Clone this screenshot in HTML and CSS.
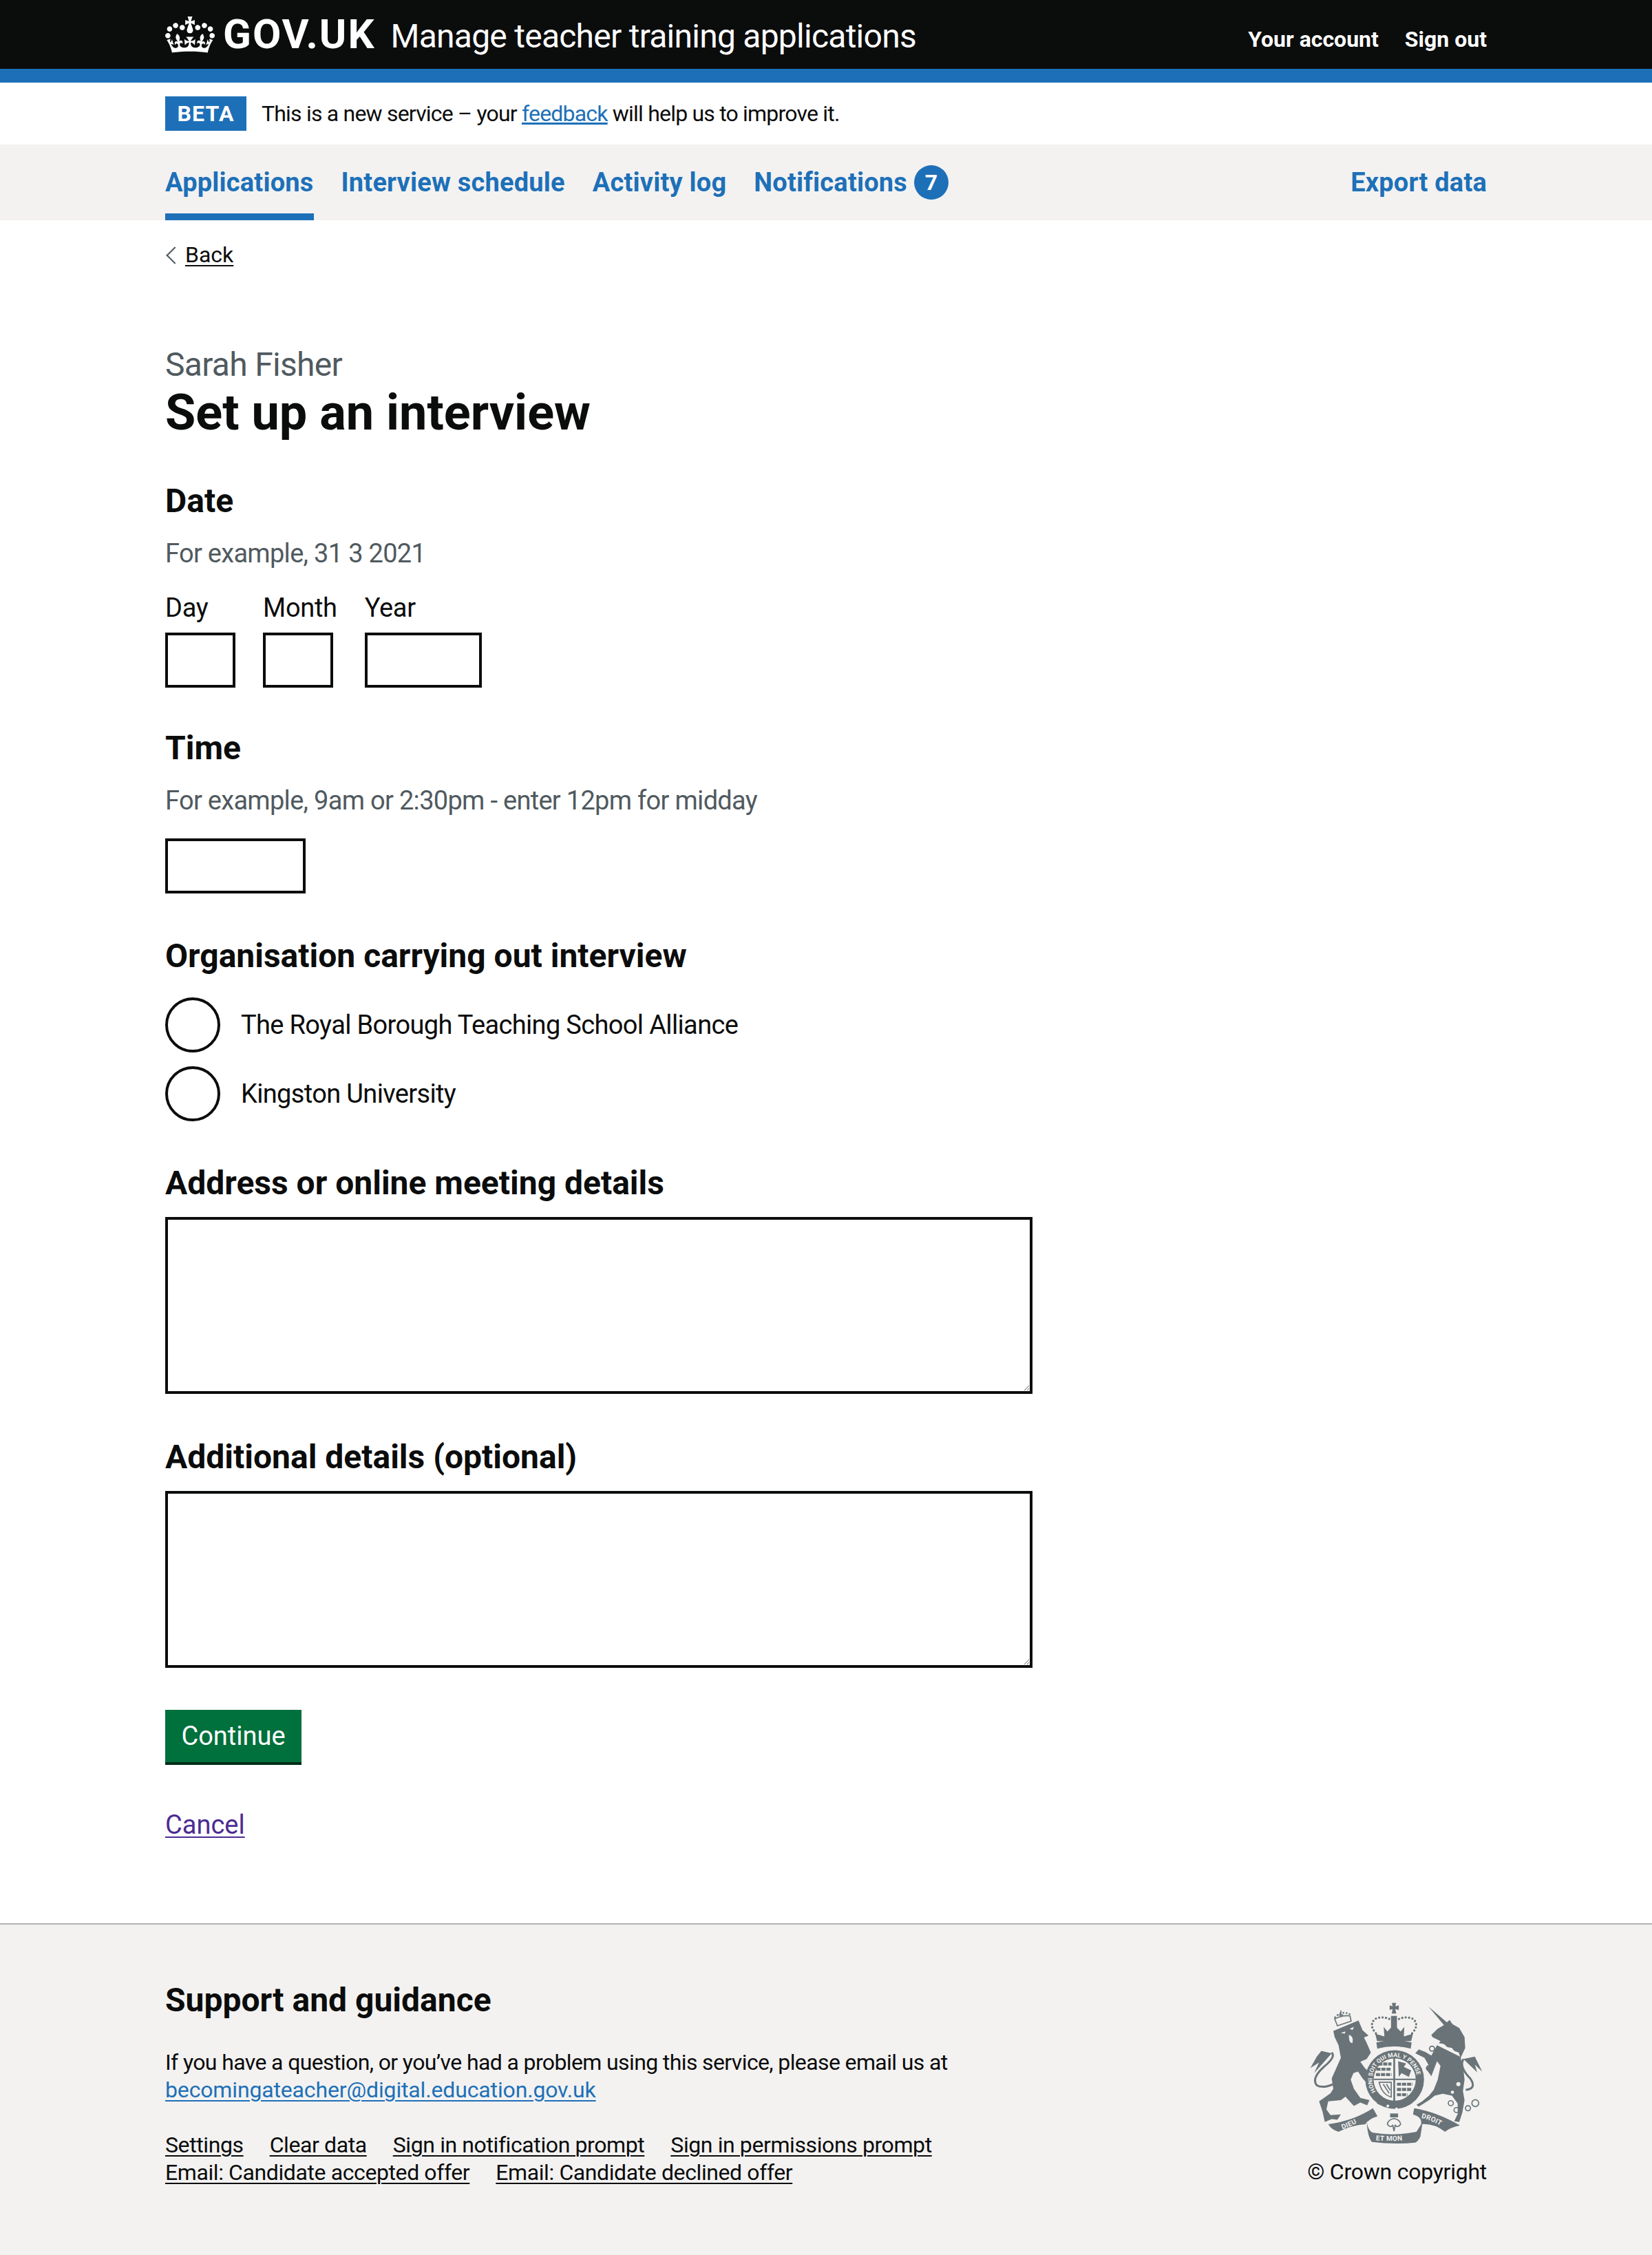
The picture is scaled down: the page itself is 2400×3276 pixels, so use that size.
FILE: index.html
```html
<!DOCTYPE html>
<html lang="en">
<head>
    <meta charset="UTF-8">
    <meta name="viewport" content="width=device-width, initial-scale=1.0">
    <title>Set up an interview - Manage teacher training applications</title>
    <link rel="stylesheet" href="styles.css">
</head>
<body>
    <header class="site-header">
        <div class="container header-row">
            <a class="logo" href="#">
                <svg class="crown" viewBox="0 0 132 97" aria-hidden="true">
                    <path fill="currentColor" d="M25 30.2c3.5 1.5 7.7-.2 9.1-3.7 1.5-3.6-.2-7.8-3.9-9.2-3.6-1.4-7.6.3-9.1 3.9-1.4 3.5.3 7.5 3.9 9zM9 39.5c3.6 1.5 7.8-.2 9.2-3.7 1.5-3.6-.2-7.8-3.9-9.1-3.6-1.5-7.6.2-9.1 3.8-1.4 3.5.3 7.5 3.8 9zM4.4 57.2c3.5 1.5 7.7-.2 9.1-3.8 1.5-3.6-.2-7.7-3.9-9.1-3.5-1.5-7.6.3-9.1 3.8-1.4 3.5.3 7.6 3.9 9.1zm38.3-21.4c3.5 1.5 7.7-.2 9.1-3.8 1.5-3.6-.2-7.7-3.9-9.1-3.6-1.5-7.6.3-9.1 3.8-1.3 3.6.4 7.7 3.9 9.1zm64.4-5.6c-3.6 1.5-7.8-.2-9.1-3.7-1.5-3.6.2-7.8 3.8-9.2 3.6-1.4 7.7.3 9.2 3.9 1.3 3.5-.4 7.5-3.9 9zm15.9 9.3c-3.6 1.5-7.7-.2-9.1-3.7-1.5-3.6.2-7.8 3.7-9.1 3.6-1.5 7.7.2 9.2 3.8 1.5 3.5-.3 7.5-3.8 9zm4.7 17.7c-3.6 1.5-7.8-.2-9.2-3.8-1.5-3.6.2-7.7 3.9-9.1 3.6-1.5 7.7.3 9.2 3.8 1.3 3.5-.4 7.6-3.9 9.1zM89.3 35.8c-3.6 1.5-7.8-.2-9.2-3.8-1.4-3.6.2-7.7 3.9-9.1 3.6-1.5 7.7.3 9.2 3.8 1.4 3.6-.3 7.7-3.9 9.1zM69.7 17.7l8.9 4.7V9.3l-8.9 2.8c-.2-.3-.5-.6-.9-.9L72.4 0H59.6l3.5 11.2c-.3.3-.6.5-.9.9l-8.8-2.8v13.1l8.8-4.7c.3.3.6.7.9.9l-5 15.4v.1c-.2.8-.4 1.6-.4 2.4 0 4.1 3.1 7.5 7 8.1h.2c.3 0 .7.1 1 .1.4 0 .7 0 1-.1h.2c4-.6 7.1-4.1 7.1-8.1 0-.8-.1-1.7-.4-2.4V34l-5.1-15.4c.4-.2.7-.6 1-.9zM66 92.8c16.9 0 32.8 1.1 47.1 3.2 4-16.9 8.9-26.7 14-33.5l-9.6-3.4c1 4.9 1.1 7.2 0 10.2-1.5-1.4-3-4.3-4.2-8.7L108.6 76c2.8-2 5-3.2 7.5-3.3-4.4 9.4-10 11.9-13.6 11.2-4.3-.8-6.3-4.6-5.6-7.9 1-4.7 5.7-5.9 8-.5 4.3-8.7-3-11.4-7.6-8.8 7.1-7.2 7.9-13.5 2.1-21.1-8 6.1-8.1 12.3-4.5 20.8-4.7-5.4-12.1-2.5-9.5 6.2 3.4-5.2 7.9-2 7.2 3.1-.6 4.3-6.4 7.8-13.5 7.2-10.3-.9-10.9-8-11.2-13.8 2.5-.5 7.1 1.8 11 7.3L80.2 60c-4.1 4.4-8 5.3-12.3 5.4 1.4-4.4 8-11.6 8-11.6H55.5s6.4 7.2 7.9 11.6c-4.2-.1-8-1-12.3-5.4l1.4 16.4c3.9-5.5 8.5-7.7 10.9-7.3-.3 5.8-.9 12.8-11.1 13.8-7.2.6-12.9-2.9-13.5-7.2-.7-5 3.8-8.3 7.1-3.1 2.7-8.7-4.6-11.6-9.4-6.2 3.7-8.5 3.6-14.7-4.6-20.8-5.8 7.6-5 13.9 2.2 21.1-4.7-2.6-11.9.1-7.7 8.8 2.3-5.5 7.1-4.2 8.1.5.7 3.3-1.3 7.1-5.7 7.9-3.5.7-9-1.8-13.5-11.2 2.5.1 4.7 1.3 7.5 3.3l-4.7-15.4c-1.2 4.4-2.7 7.2-4.3 8.7-1.1-3-.9-5.3 0-10.2l-9.5 3.4c5 6.9 9.9 16.7 14 33.5 14.8-2.1 30.8-3.2 47.7-3.2z"/>
                </svg>
                <span class="logo-text">GOV.UK</span>
            </a>
            <a class="service-name" href="#">Manage teacher training applications</a>
            <nav class="account-nav">
                <a href="#">Your account</a>
                <a href="#">Sign out</a>
            </nav>
        </div>
    </header>

    <div class="container phase-banner">
        <strong class="phase-tag">BETA</strong>
        <span class="phase-text">This is a new service – your <a class="link" href="#">feedback</a> will help us to improve it.</span>
    </div>

    <nav class="primary-nav">
        <div class="container primary-row">
            <a class="nav-item active" href="#">Applications</a>
            <a class="nav-item" href="#">Interview schedule</a>
            <a class="nav-item" href="#">Activity log</a>
            <a class="nav-item" href="#">Notifications <span class="badge">7</span></a>
            <a class="nav-item nav-end" href="#">Export data</a>
        </div>
    </nav>

    <main class="container">
        <a class="back-link" href="#">Back</a>

        <form class="interview-form">
            <span class="caption">Sarah Fisher</span>
            <h1>Set up an interview</h1>

            <fieldset class="form-group date-group">
                <legend class="heading">Date</legend>
                <div class="hint">For example, 31 3 2021</div>
                <div class="date-input">
                    <div class="date-item">
                        <label for="day">Day</label>
                        <input id="day" class="input width-2" type="text">
                    </div>
                    <div class="date-item">
                        <label for="month">Month</label>
                        <input id="month" class="input width-2" type="text">
                    </div>
                    <div class="date-item">
                        <label for="year">Year</label>
                        <input id="year" class="input width-4" type="text">
                    </div>
                </div>
            </fieldset>

            <div class="form-group time-group">
                <label class="heading" for="time">Time</label>
                <div class="hint">For example, 9am or 2:30pm - enter 12pm for midday</div>
                <input id="time" class="input width-5" type="text">
            </div>

            <fieldset class="form-group radio-group">
                <legend class="heading">Organisation carrying out interview</legend>
                <div class="radios">
                    <label class="radio"><input type="radio" name="org"> The Royal Borough Teaching School Alliance</label>
                    <label class="radio"><input type="radio" name="org"> Kingston University</label>
                </div>
            </fieldset>

            <div class="form-group">
                <label class="heading tight" for="address">Address or online meeting details</label>
                <textarea id="address" class="textarea" rows="5"></textarea>
            </div>

            <div class="form-group last-group">
                <label class="heading tight" for="details">Additional details (optional)</label>
                <textarea id="details" class="textarea" rows="5"></textarea>
            </div>

            <button class="button" type="button">Continue</button>
            <p class="cancel"><a href="#">Cancel</a></p>
        </form>
    </main>

    <footer class="site-footer">
        <div class="container footer-row">
            <div class="footer-main">
                <h2>Support and guidance</h2>
                <p>If you have a question, or you’ve had a problem using this service, please email us at<br>
                    <a class="link" href="#">becomingateacher@digital.education.gov.uk</a></p>
                <ul class="footer-links">
                    <li><a href="#">Settings</a></li>
                    <li><a href="#">Clear data</a></li>
                    <li><a href="#">Sign in notification prompt</a></li>
                    <li><a href="#">Sign in permissions prompt</a></li>
                    <li><a href="#">Email: Candidate accepted offer</a></li>
                    <li><a href="#">Email: Candidate declined offer</a></li>
                </ul>
            </div>
            <div class="copyright">
                <svg class="crest" viewBox="70 60 760 625" aria-hidden="true">
                    <defs>
                        <path id="garter" d="M360 456 A98 98 0 1 1 496 480"/>
                        <path id="rib-dieu" d="M205 620 Q265 598 330 560"/>
                        <path id="rib-mon" d="M350 664 Q435 674 530 658"/>
                        <path id="rib-droit" d="M550 566 Q610 578 672 622"/>
                    </defs>
                    <g fill="#6a7478" stroke="none">
                        <!-- lion -->
                        <path d="M172 188 L282 142 L300 185 L326 208 L306 216 L320 245 L336 282 L318 310 L290 322 L310 350 L332 372 L340 405 L322 420 L300 395 L280 365 L260 372 L248 400 L262 440 L290 480 L330 490 L320 512 L290 500 L262 515 L225 475 L205 490 L150 495 L142 530 L160 555 L205 552 L190 575 L165 572 L135 585 L125 540 L110 495 L160 460 L172 440 L165 395 L205 305 L195 250 L178 215 Z"/>
                        <!-- unicorn -->
                        <path d="M588 82 L668 150 L680 140 L692 158 L722 175 L745 215 L748 262 L728 305 L738 340 L745 400 L738 450 L745 490 L735 545 L722 585 L700 582 L715 550 L715 505 L690 470 L650 462 L615 470 L590 490 L545 518 L535 510 L560 495 L590 470 L610 445 L628 400 L640 340 L625 320 L600 385 L575 350 L590 340 L570 305 L530 285 L545 268 L575 280 L600 295 L625 250 L640 232 L605 215 L600 205 L628 178 L655 162 Z"/>
                        <!-- tail tufts -->
                        <path d="M165 285 L120 275 L100 300 L72 350 L110 325 L88 372 L130 325 Z"/>
                        <path d="M740 310 L790 300 L822 365 L790 335 L800 368 L760 330 Z"/>
                        <!-- royal crown -->
                        <path d="M428 65 L446 65 L443 80 L458 76 L458 96 L443 92 L447 112 L427 112 L431 92 L418 96 L418 76 L431 80 Z"/>
                        <path d="M424 122 H450 V186 H424 Z"/>
                        <path d="M355 200 L395 212 L392 170 L408 190 L437 160 L466 190 L482 170 L480 212 L520 200 L512 232 H363 Z"/>
                        <path d="M360 238 Q437 218 514 238 L510 265 Q437 245 364 265 Z"/>
                        <!-- garter -->
                        <circle cx="440" cy="400" r="128"/>
                        <path d="M362 505 Q445 545 520 500 L505 478 Q440 510 375 480 Z"/>
                        <!-- fleur -->
                        <path d="M420 548 H455 V565 H420 Z"/>
                        <!-- ribbon -->
                        <path d="M150 595 Q260 580 345 525 L365 560 Q325 572 312 595 Q250 600 195 628 Q165 620 150 595 Z"/>
                        <path d="M318 585 Q325 625 345 632 Q435 648 535 628 L562 585 L552 650 Q540 672 530 675 Q435 685 340 672 Q322 650 318 585 Z"/>
                        <path d="M525 525 Q620 540 725 600 Q680 610 660 628 Q610 590 555 595 Q562 565 520 552 Z"/>
                    </g>
                    <g fill="none" stroke="#6a7478">
                        <!-- tails -->
                        <path stroke-width="9" d="M172 420 Q125 440 100 425 Q75 395 130 345 Q185 300 165 282"/>
                        <path stroke-width="9" d="M750 445 Q800 440 770 395 Q720 345 740 310"/>
                        <!-- lion crown -->
                        <path stroke-width="5" d="M190 165 L178 135 Q210 118 245 122 L250 145 Z"/>
                        <path stroke-width="5" d="M195 118 H215 M205 98 V128"/>
                        <path stroke-width="8" stroke-linecap="round" stroke-dasharray="0 14" d="M180 128 Q210 95 250 118"/>
                        <!-- crown pearls -->
                        <path stroke-width="10" stroke-linecap="round" stroke-dasharray="0 15" d="M358 198 Q325 160 355 135 Q390 120 426 140"/>
                        <path stroke-width="10" stroke-linecap="round" stroke-dasharray="0 15" d="M516 198 Q550 160 520 135 Q485 120 450 140"/>
                        <!-- unicorn chain -->
                        <g stroke-width="5">
                            <circle cx="603" cy="265" r="11"/>
                            <circle cx="590" cy="350" r="11"/>
                            <circle cx="685" cy="503" r="11"/>
                            <circle cx="710" cy="533" r="11"/>
                            <circle cx="760" cy="525" r="11"/>
                            <circle cx="792" cy="503" r="15"/>
                            <circle cx="727" cy="372" r="11"/>
                        </g>
                        <path stroke-width="5" d="M437 570 Q410 575 408 595 Q420 612 432 600 L437 625 L442 600 Q454 612 466 595 Q464 575 437 570 Z"/>
                    </g>
                    <g fill="#f3f2f1" stroke="none">
                        <!-- shield, faces and collar -->
                        <circle cx="440" cy="400" r="92"/>
                        <path d="M625 250 L725 300 L720 282 L700 275 L690 262 L670 258 L655 245 L630 240 Z"/>
                        <path d="M205 196 L225 190 L222 200 Z M244 178 L262 170 L256 184 Z"/>
                        <path d="M240 205 Q262 210 256 240 Q240 245 240 205 Z"/>
                        <circle cx="718" cy="420" r="9"/>
                        <circle cx="692" cy="455" r="7"/>
                        <circle cx="410" cy="515" r="6"/>
                        <circle cx="448" cy="528" r="6"/>
                    </g>
                    <g fill="#6a7478" stroke="none">
                        <!-- shield quarters -->
                        <rect x="434" y="298" width="8" height="204"/>
                        <rect x="348" y="396" width="184" height="6"/>
                        <path d="M455 320 L490 330 L480 345 L512 360 L502 388 L470 372 L458 388 Z"/>
                    </g>
                    <g fill="none" stroke="#6a7478">
                        <path stroke-width="13" stroke-dasharray="18 4" d="M368 332 H426 M360 355 H426 M358 378 H426"/>
                        <path stroke-width="13" stroke-dasharray="18 4" d="M450 420 H518 M450 443 H512 M450 466 H496"/>
                        <path stroke-width="5" d="M372 412 H425 V476 Q385 466 372 412 Z"/>
                        <path stroke-width="5" d="M390 420 L416 460 M404 420 L420 446"/>
                    </g>
                    <g class="crest-text">
                        <text class="garter-text"><textPath href="#garter" startOffset="4">HONI SOIT QUI MAL Y PENSE</textPath></text>
                        <text class="ribbon-text"><textPath href="#rib-dieu" startOffset="8">DIEU</textPath></text>
                        <text class="ribbon-text"><textPath href="#rib-mon" startOffset="8">ET MON</textPath></text>
                        <text class="ribbon-text"><textPath href="#rib-droit" startOffset="6">DROIT</textPath></text>
                    </g>
                </svg>
                <span class="copyright-text">© Crown copyright</span>
            </div>
        </div>
    </footer>
</body>
</html>
```

FILE: styles.css
```css
* {
    box-sizing: border-box;
}
body {
    margin: 0;
    font-family: Roboto, Arial, sans-serif;
    font-size: 38px;
    line-height: 50px;
    color: #0b0c0c;
    background-color: #fff;
}
a {
    color: inherit;
}
.container {
    width: 1920px;
    margin: 0 auto;
}
.link {
    color: #1d70b8;
}

/* header */
.site-header {
    height: 120px;
    background-color: #0b0c0c;
    border-bottom: 20px solid #1d70b8;
    color: #fff;
}
.header-row {
    display: flex;
    align-items: center;
    height: 100px;
}
.header-row a {
    color: #fff;
    text-decoration: none;
}
.logo {
    display: flex;
    align-items: center;
    margin-right: 22px;
}
.crown {
    width: 72px;
    height: 53px;
    margin-right: 12px;
}
.logo-text {
    font-size: 60px;
    font-weight: 700;
    line-height: 60px;
    letter-spacing: 2px;
}
.service-name {
    padding-top: 6px;
    font-size: 48px;
    line-height: 60px;
    letter-spacing: -0.75px;
}
.account-nav {
    display: flex;
    gap: 38px;
    margin-left: auto;
    padding-top: 14px;
    font-size: 32px;
    font-weight: 700;
}

/* phase banner */
.phase-banner {
    display: flex;
    align-items: center;
    height: 90px;
    font-size: 32px;
}
.phase-text {
    letter-spacing: -0.8px;
}
.phase-tag {
    width: 118px;
    height: 50px;
    margin-right: 22px;
    background-color: #1d70b8;
    color: #fff;
    font-size: 32px;
    line-height: 50px;
    font-weight: 700;
    text-align: center;
    letter-spacing: 1.2px;
}

/* primary nav */
.primary-nav {
    height: 110px;
    background-color: #f3f2f1;
}
.primary-row {
    display: flex;
    gap: 40px;
    height: 110px;
}
.nav-item {
    display: flex;
    align-items: center;
    gap: 10px;
    height: 110px;
    color: #1d70b8;
    font-weight: 700;
    text-decoration: none;
    letter-spacing: 0.2px;
}
.nav-item.active {
    border-bottom: 10px solid #1d70b8;
    padding-top: 10px;
}
.nav-end {
    margin-left: auto;
}
.badge {
    width: 50px;
    height: 50px;
    border-radius: 50%;
    background-color: #1d70b8;
    color: #fff;
    font-size: 32px;
    line-height: 50px;
    text-align: center;
}

/* back link */
.back-link {
    display: inline-block;
    position: relative;
    margin-top: 30px;
    padding-left: 29px;
    font-size: 32px;
    line-height: 40px;
    text-underline-offset: 4px;
    text-decoration-thickness: 2px;
}
.back-link::before {
    content: "";
    position: absolute;
    top: 12px;
    left: 5px;
    width: 16px;
    height: 16px;
    border-left: 2px solid #505a5f;
    border-bottom: 2px solid #505a5f;
    transform: rotate(45deg);
}

/* form */
.interview-form {
    padding-top: 107px;
}
.caption {
    display: block;
    height: 60px;
    color: #505a5f;
    font-size: 48px;
    line-height: 60px;
    letter-spacing: -0.7px;
}
h1 {
    margin: 0 0 58px;
    font-size: 72px;
    line-height: 80px;
    font-weight: 700;
}
fieldset {
    margin: 0;
    padding: 0;
    border: 0;
    min-width: 0;
}
legend {
    padding: 0;
}
.form-group {
    margin-bottom: 62px;
}
.date-group {
    margin-bottom: 58px;
}
.time-group {
    margin-bottom: 61px;
}
.radio-group {
    margin-bottom: 40px;
}
.last-group {
    margin-bottom: 61px;
}
.heading {
    display: block;
    margin-bottom: 21px;
    font-size: 48px;
    line-height: 60px;
    font-weight: 700;
}
.heading.tight {
    margin-bottom: 19px;
}
.hint {
    margin-bottom: 29px;
    color: #505a5f;
    letter-spacing: -0.7px;
}
.date-input {
    display: flex;
    gap: 40px;
}
.date-item label {
    display: block;
    margin-bottom: 11px;
    letter-spacing: -0.3px;
}
.input {
    display: block;
    height: 80px;
    border: 4px solid #0b0c0c;
    border-radius: 0;
    background-color: #fff;
}
.width-2 {
    width: 102px;
}
.width-4 {
    width: 170px;
}
.width-5 {
    width: 204px;
    margin-top: 30px;
}
.time-group .hint {
    margin-bottom: 0;
}
.radios {
    padding-top: 9px;
}
.radio {
    display: flex;
    align-items: center;
    gap: 30px;
    min-height: 80px;
    margin-bottom: 20px;
    letter-spacing: -0.65px;
}
.radio input {
    appearance: none;
    width: 80px;
    height: 80px;
    margin: 0;
    border: 4px solid #0b0c0c;
    border-radius: 50%;
    background-color: #fff;
}
.textarea {
    display: block;
    width: 1260px;
    height: 257px;
    border: 4px solid #0b0c0c;
    border-radius: 0;
    background-color: #fff;
}
.button {
    display: block;
    width: 198px;
    height: 76px;
    padding: 0;
    border: 0;
    border-radius: 0;
    background-color: #00703c;
    box-shadow: 0 4px 0 #002d18;
    color: #fff;
    font-family: inherit;
    font-size: 38px;
    line-height: 50px;
}
.cancel {
    margin: 66px 0 0;
    padding-bottom: 118px;
}
.cancel a {
    color: #4c2c92;
    text-underline-offset: 4px;
    text-decoration-thickness: 2px;
}

/* footer */
.site-footer {
    height: 483px;
    border-top: 2px solid #b1b4b6;
    background-color: #f3f2f1;
    font-size: 32px;
    line-height: 40px;
}
.footer-row {
    display: flex;
    justify-content: space-between;
    padding-top: 80px;
}
.footer-main h2 {
    margin: 0 0 40px;
    font-size: 48px;
    line-height: 60px;
    font-weight: 700;
}
.footer-main p {
    margin: 0 0 40px;
    letter-spacing: -0.62px;
}
.footer-main p .link {
    letter-spacing: -0.15px;
}
.footer-main a {
    text-underline-offset: 4px;
    text-decoration-thickness: 2px;
}
.footer-links {
    display: flex;
    flex-wrap: wrap;
    column-gap: 38px;
    width: 1300px;
    margin: 0;
    padding: 0;
    list-style: none;
    letter-spacing: -0.4px;
}
.copyright {
    display: flex;
    flex-direction: column;
    align-items: center;
    gap: 19px;
    margin-top: 32px;
}
.copyright-text {
    letter-spacing: -0.25px;
}
.crest {
    display: block;
    width: 253px;
    height: 208px;
}
.crest-text {
    fill: #f3f2f1;
    font-weight: 700;
}
.garter-text {
    font-size: 26px;
}
.ribbon-text {
    font-size: 30px;
    letter-spacing: 1px;
}
```
